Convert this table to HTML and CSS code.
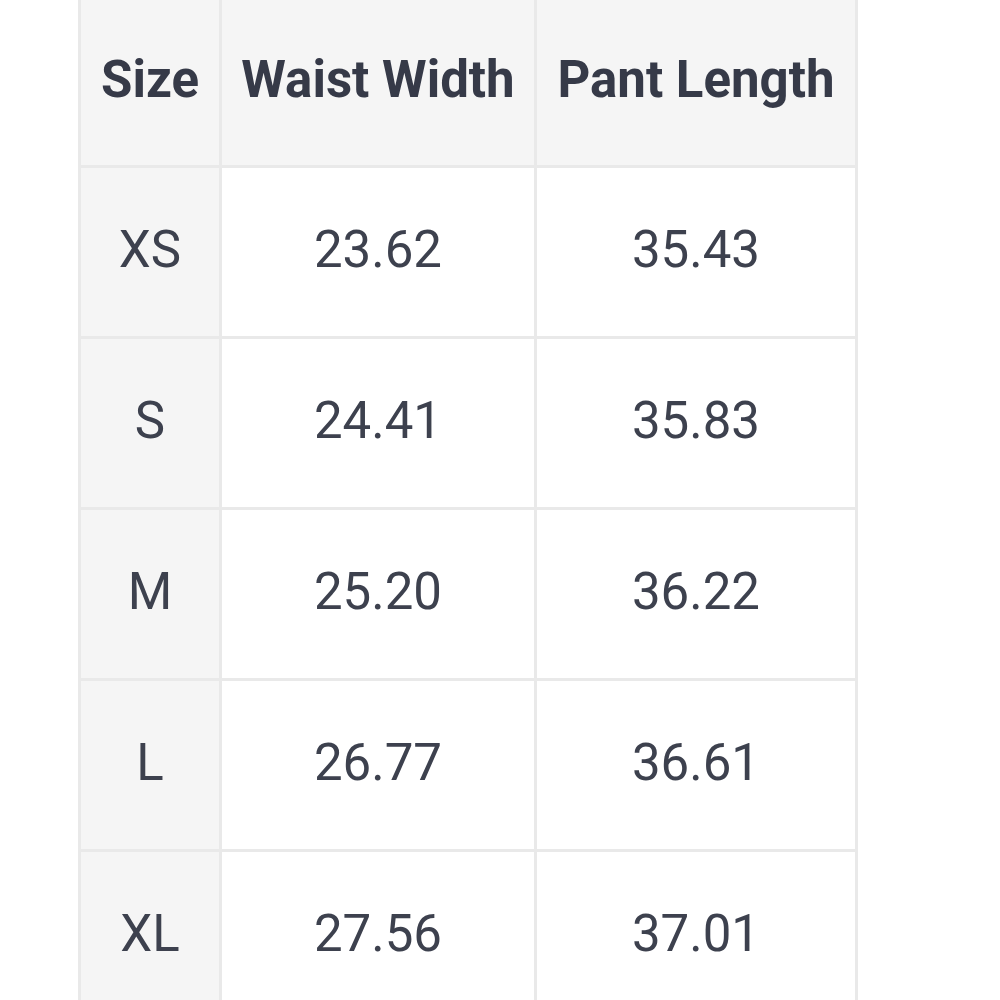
FILE: index.html
```html
<!DOCTYPE html>
<html>
<head>
<meta charset="utf-8">
<link rel="stylesheet" href="styles.css">
</head>
<body>
<div class="page">
<table class="size-table">
<thead>
<tr><th class="c1">Size</th><th class="c2">Waist Width</th><th class="c3">Pant Length</th></tr>
</thead>
<tbody>
<tr><td class="size">XS</td><td>23.62</td><td>35.43</td></tr>
<tr><td class="size">S</td><td>24.41</td><td>35.83</td></tr>
<tr><td class="size">M</td><td>25.20</td><td>36.22</td></tr>
<tr><td class="size">L</td><td>26.77</td><td>36.61</td></tr>
<tr><td class="size">XL</td><td>27.56</td><td>37.01</td></tr>
</tbody>
</table>
</div>
</body>
</html>
```
FILE: styles.css
```css
html, body {
  margin: 0;
  padding: 0;
  background: #ffffff;
}
.page {
  padding-left: 78px;
  margin-top: -8px;
}
.size-table {
  border-collapse: collapse;
  table-layout: fixed;
  width: 777px;
  font-family: Roboto, "Liberation Sans", sans-serif;
  font-size: 51px;
  color: #3d414e;
}
.size-table th, .size-table td {
  border: 3px solid #e9e9e9;
  text-align: center;
  vertical-align: middle;
  padding: 0 0 5px 0;
  white-space: nowrap;
  height: 171px;
  box-sizing: border-box;
}
.size-table th {
  background: #f5f5f5;
  font-weight: 700;
  font-size: 51px;
  color: #363a48;
  height: 173px;
  padding: 0 0 2px 0;
}
.c1 { width: 141px; }
.c2 { width: 315px; }
.c3 { width: 321px; }
.size-table td.size {
  background: #f5f5f5;
}
```
